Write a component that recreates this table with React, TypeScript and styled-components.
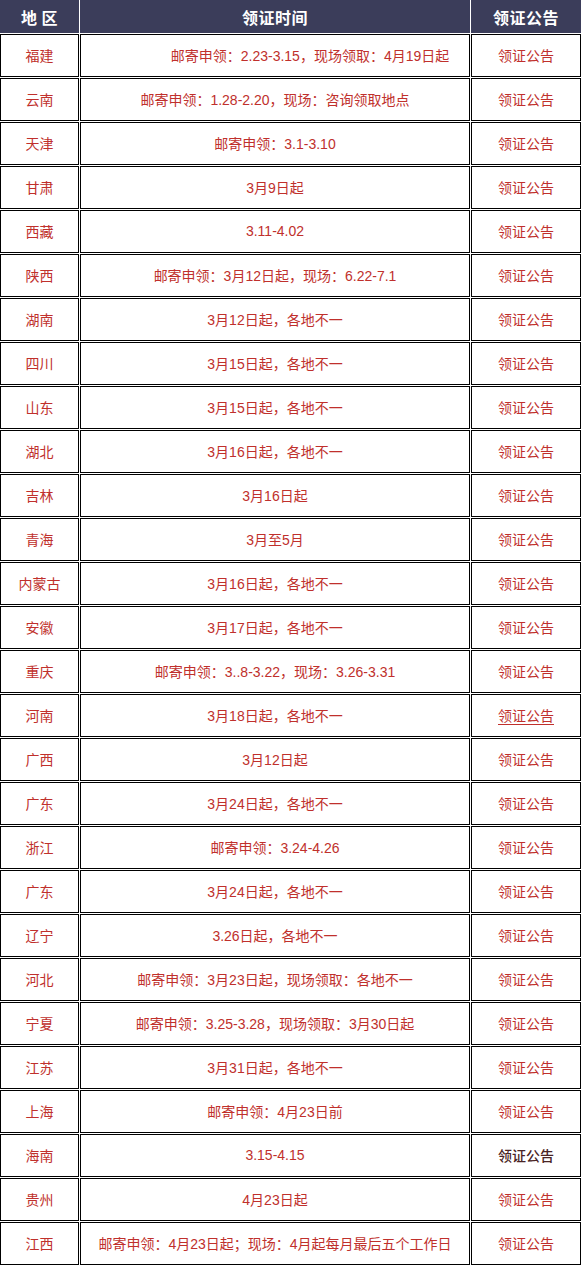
import React from "react";
import styled, { createGlobalStyle } from "styled-components";

const Global = createGlobalStyle`
  html, body { margin: 0; padding: 0; background: #ffffff; }
  body { font-family: "Liberation Sans", "Noto Sans CJK SC", sans-serif; }
`;

const Table = styled.div`
  display: grid;
  grid-template-columns: 79px 390px 110px;
  grid-auto-rows: 43px;
  grid-template-rows: 33px;
  gap: 1px;
  width: 581px;
  background: #ffffff;
`;

const HeadCell = styled.div`
  background: #3b3d5a;
  color: #ffffff;
  font-family: "Noto Sans CJK SC", sans-serif;
  font-weight: 700;
  font-size: 16px;
  display: flex;
  align-items: center;
  justify-content: center;
  letter-spacing: 0.5px;
  padding-top: 1px;
`;

const Cell = styled.div<{ $offset?: number; $dark?: boolean; $underline?: boolean }>`
  box-sizing: border-box;
  border: 1px solid #000000;
  display: flex;
  align-items: center;
  justify-content: center;
  font-size: 14px;
  color: ${(p) => (p.$dark ? "#4a2424" : "#c0302c")};
  font-weight: ${(p) => (p.$dark ? 500 : 400)};
  padding-left: ${(p) => p.$offset ?? 0}px;
  padding-bottom: 2px;
  white-space: nowrap;
  text-decoration: ${(p) => (p.$underline ? "underline" : "none")};
  text-underline-offset: 3px;
`;

type Row = { region: string; time: string; offset?: number; underline?: boolean; dark?: boolean };

const rows: Row[] = [
  { region: "福建", time: "邮寄申领：2.23-3.15，现场领取：4月19日起", offset: 70 },
  { region: "云南", time: "邮寄申领：1.28-2.20，现场：咨询领取地点" },
  { region: "天津", time: "邮寄申领：3.1-3.10" },
  { region: "甘肃", time: "3月9日起" },
  { region: "西藏", time: "3.11-4.02" },
  { region: "陕西", time: "邮寄申领：3月12日起，现场：6.22-7.1" },
  { region: "湖南", time: "3月12日起，各地不一" },
  { region: "四川", time: "3月15日起，各地不一" },
  { region: "山东", time: "3月15日起，各地不一" },
  { region: "湖北", time: "3月16日起，各地不一" },
  { region: "吉林", time: "3月16日起" },
  { region: "青海", time: "3月至5月" },
  { region: "内蒙古", time: "3月16日起，各地不一" },
  { region: "安徽", time: "3月17日起，各地不一" },
  { region: "重庆", time: "邮寄申领：3..8-3.22，现场：3.26-3.31" },
  { region: "河南", time: "3月18日起，各地不一", underline: true },
  { region: "广西", time: "3月12日起" },
  { region: "广东", time: "3月24日起，各地不一" },
  { region: "浙江", time: "邮寄申领：3.24-4.26" },
  { region: "广东", time: "3月24日起，各地不一" },
  { region: "辽宁", time: "3.26日起，各地不一" },
  { region: "河北", time: "邮寄申领：3月23日起，现场领取：各地不一" },
  { region: "宁夏", time: "邮寄申领：3.25-3.28，现场领取：3月30日起" },
  { region: "江苏", time: "3月31日起，各地不一" },
  { region: "上海", time: "邮寄申领：4月23日前" },
  { region: "海南", time: "3.15-4.15", dark: true },
  { region: "贵州", time: "4月23日起" },
  { region: "江西", time: "邮寄申领：4月23日起；现场：4月起每月最后五个工作日" },
];

export default function App() {
  return (
    <>
      <Global />
      <Table>
        <HeadCell>地 区</HeadCell>
        <HeadCell>领证时间</HeadCell>
        <HeadCell>领证公告</HeadCell>
        {rows.map((r, i) => (
          <React.Fragment key={i}>
            <Cell>{r.region}</Cell>
            <Cell $offset={r.offset}>{r.time}</Cell>
            <Cell $underline={r.underline} $dark={r.dark}>领证公告</Cell>
          </React.Fragment>
        ))}
      </Table>
    </>
  );
}
